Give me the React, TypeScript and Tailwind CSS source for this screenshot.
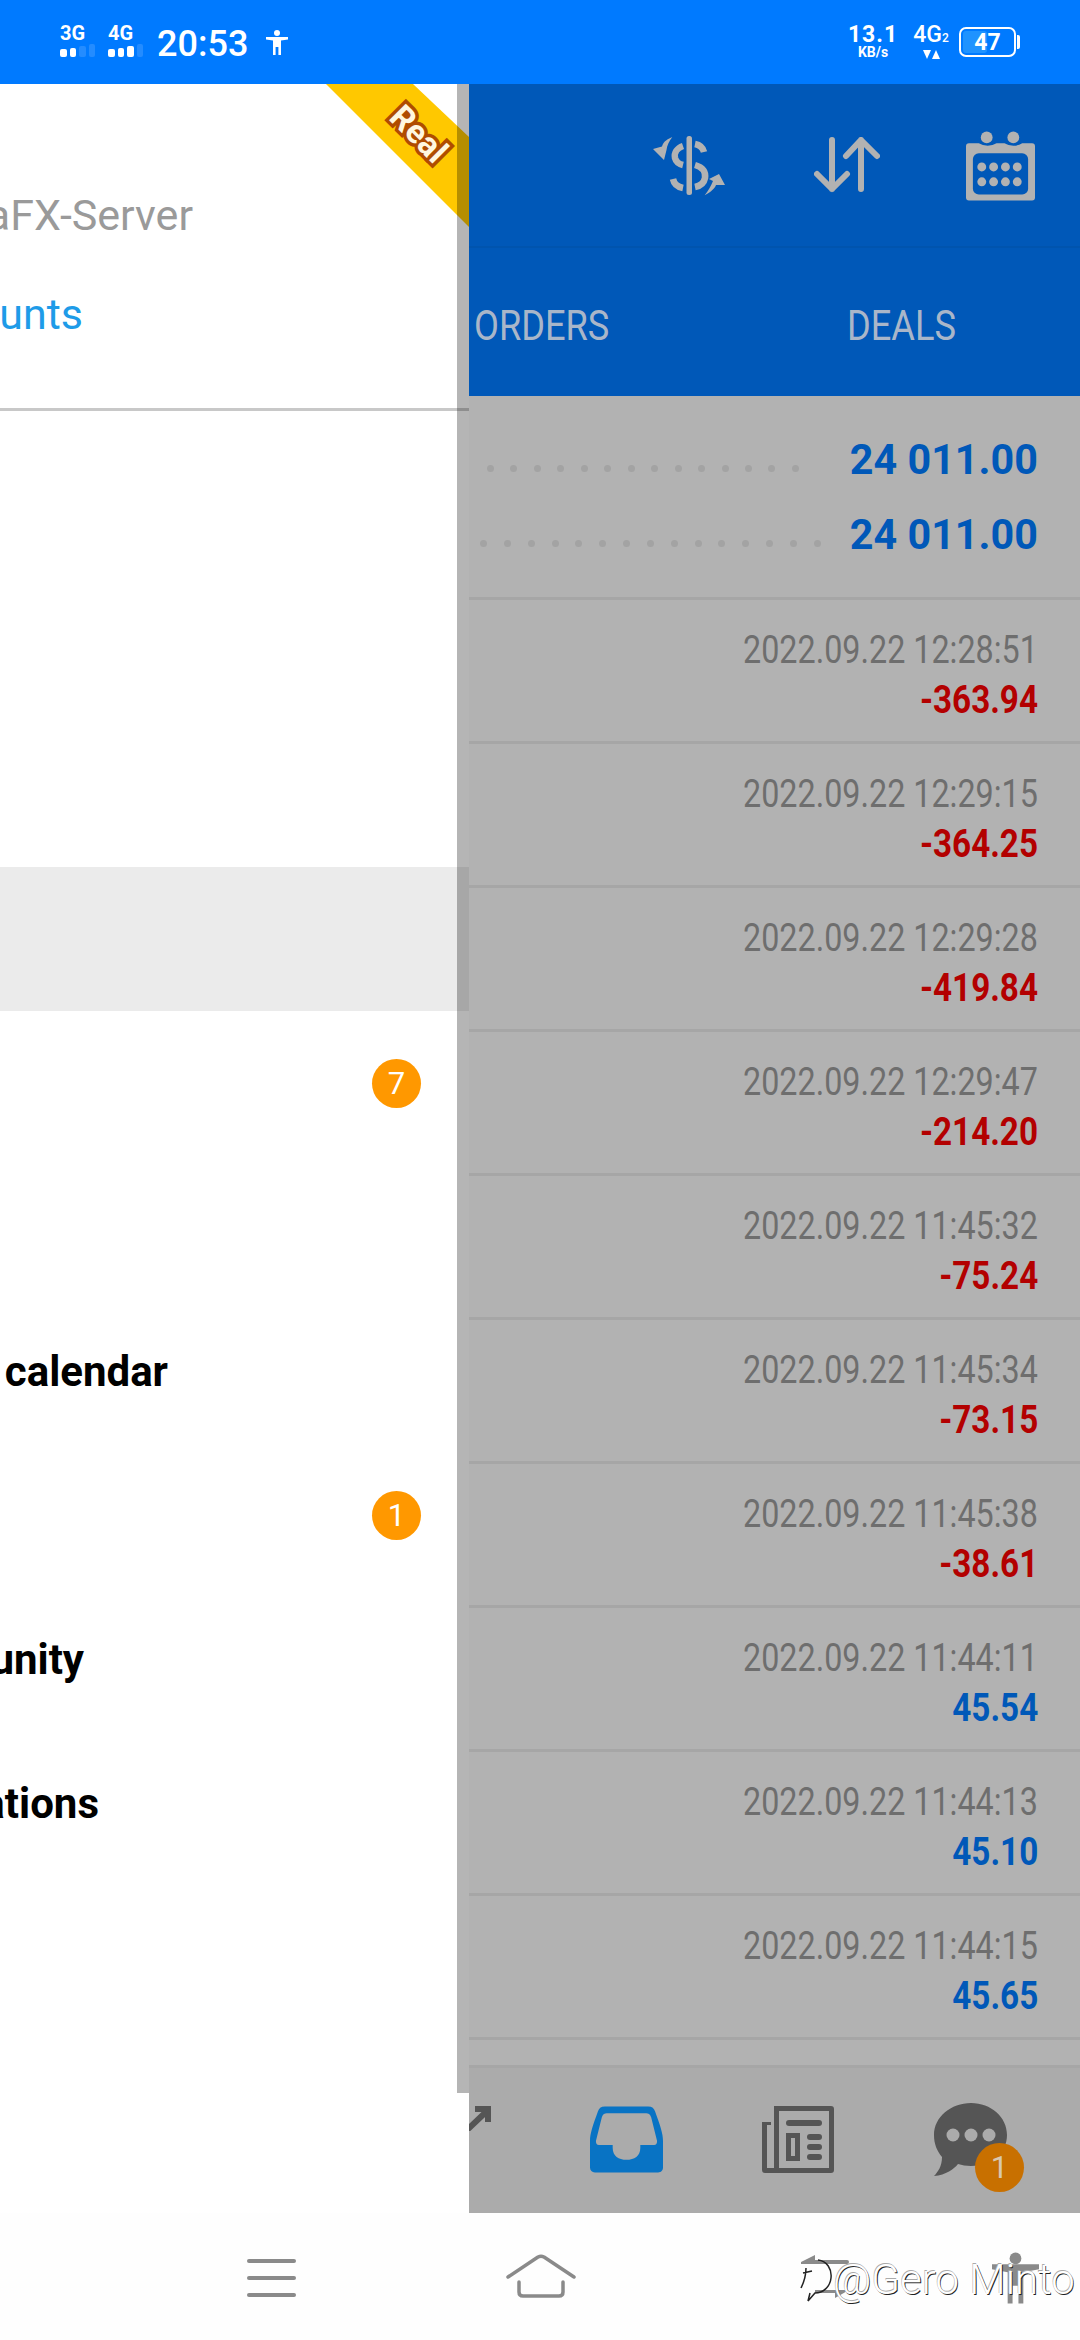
const dates: [string, string, boolean][] = [
  ["2022.09.22 12:28:51", "-363.94", false],
  ["2022.09.22 12:29:15", "-364.25", false],
  ["2022.09.22 12:29:28", "-419.84", false],
  ["2022.09.22 12:29:47", "-214.20", false],
  ["2022.09.22 11:45:32", "-75.24", false],
  ["2022.09.22 11:45:34", "-73.15", false],
  ["2022.09.22 11:45:38", "-38.61", false],
  ["2022.09.22 11:44:11", "45.54", true],
  ["2022.09.22 11:44:13", "45.10", true],
  ["2022.09.22 11:44:15", "45.65", true],
];

const roboto = "font-['Roboto',sans-serif]";

function Bars({ on }: { on: number }) {
  return (
    <div className="mt-[3px] flex items-end gap-[3px]">
      {[8, 9, 11, 13].map((h, i) => (
        <span
          key={i}
          className="w-[6.500px] rounded-[2px]"
          style={{ height: h, background: i < on ? "#fff" : "rgba(255,255,255,.14)" }}
        />
      ))}
    </div>
  );
}

function Sig({ t, on }: { t: string; on: number }) {
  return (
    <div className="mt-[-2px] flex w-[38px] flex-col items-start">
      <span className="text-[20px] leading-[16px] font-bold text-white">{t}</span>
      <Bars on={on} />
    </div>
  );
}

function StatusBar() {
  return (
    <div className={`flex h-[84px] shrink-0 items-center bg-[#007aff] ${roboto} text-white`}>
      <div className="ml-[60px] flex items-center gap-[10px]">
        <Sig t="3G" on={2} />
        <Sig t="4G" on={3} />
      </div>
      <span className="ml-[11px] mt-[3px] text-[36px] leading-none font-medium">20:53</span>
      <svg className="ml-[18px] mt-[1px]" width="22" height="25" viewBox="0 0 22 25" fill="#fff">
        <circle cx="11" cy="3" r="3" />
        <path d="M0 7h22v2.400l-7 1V25h-2.600v-8h-2.800v8H7V10.400l-7-1z" />
      </svg>
      <div className="ml-auto flex items-center">
        <div className="flex w-[46px] flex-col items-center">
          <span className="text-[23px] leading-[20px] font-bold tracking-[1px]">13.1</span>
          <span className="text-[14px] leading-[14px] font-bold">KB/s</span>
        </div>
        <div className="ml-[17px] flex w-[36px] flex-col items-center">
          <span className="text-[23px] leading-[20px] font-medium whitespace-nowrap">
            4G<span className="text-[12px]">2</span>
          </span>
          <span className="mt-[2px] flex gap-[1px]">
            <svg width="8" height="9" viewBox="0 0 8 9" fill="#fff"><path d="M0 0h8L4 9z" /></svg>
            <svg width="8" height="9" viewBox="0 0 8 9" fill="#fff"><path d="M0 9h8L4 0z" /></svg>
          </span>
        </div>
        <div className="relative ml-[10px] flex h-[30px] w-[57px] items-center justify-center rounded-[7px] border-2 border-white">
          <div className="absolute inset-y-[2px] left-[2px] w-[24px] rounded-[3px] bg-[#1f93ff]" />
          <span className="relative text-[23px] leading-none font-bold">47</span>
        </div>
        <div className="ml-[1px] mr-[60px] h-[14px] w-[3px] rounded-r-[2px] bg-white" />
      </div>
    </div>
  );
}

function DrawerRow({ label, right, badge, selected }: { label?: string; right: number; badge?: string; selected?: boolean }) {
  return (
    <div className={`relative flex h-[144px] shrink-0 items-center ${selected ? "bg-[#ebebeb]" : ""}`}>
      {label && (
        <div className="flex justify-end pt-[2px]" style={{ width: right }}>
          <span className="text-[42px] leading-none font-bold whitespace-nowrap text-black">{label}</span>
        </div>
      )}
      {badge && (
        <span className="absolute top-[48px] left-[372px] flex h-[49px] w-[49px] items-center justify-center rounded-full bg-[#ff9800] text-[31px] leading-none text-white">
          {badge}
        </span>
      )}
    </div>
  );
}

function Drawer() {
  return (
    <div className={`relative w-[469px] shrink-0 overflow-hidden bg-white ${roboto}`}>
      <div className="flex h-[327px] flex-col border-b-[3px] border-[#c8c8c8]">
        <div className="mt-[106px] flex w-[193px] justify-end">
          <span className="text-[43px] leading-[50px] whitespace-nowrap text-[#9a9a9a]">aFX-Server</span>
        </div>
        <div className="mt-[49px] flex w-[83px] justify-end">
          <span className="text-[43px] leading-[50px] whitespace-nowrap text-[#1e9be8]">unts</span>
        </div>
      </div>
      <div className="mt-[456px] flex flex-col">
        <DrawerRow selected right={0} />
        <DrawerRow right={0} badge="7" />
        <DrawerRow right={0} />
        <DrawerRow right={168} label="calendar" />
        <DrawerRow right={0} badge="1" />
        <DrawerRow right={84} label="unity" />
        <DrawerRow right={99} label="ations" />
      </div>
      <svg className="absolute top-0 left-[326px]" width="143" height="143" viewBox="0 0 143 143">
        <path d="M0 0h87l56 53v90z" fill="#ffc800" />
      </svg>
      <span className="absolute top-[32px] left-[386px] rotate-[45deg] text-[33px] leading-[36px] font-bold text-[#fff7e0] [-webkit-text-stroke:7px_#b04c00] [paint-order:stroke_fill]">
        Real
      </span>
      <div className="absolute top-0 right-0 h-[2009px] w-[12px] bg-black/[.29]" />
    </div>
  );
}

function Dots({ n, w }: { n: number; w: number }) {
  return (
    <div className="flex justify-between" style={{ width: w }}>
      {Array.from({ length: n }).map((_, i) => (
        <span key={i} className="h-[7px] w-[7px] rounded-full bg-[#a3a3a3]" />
      ))}
    </div>
  );
}

function Balance({ n, w, left }: { n: number; w: number; left: number }) {
  return (
    <div className="flex h-[75px] items-center justify-between pr-[42px]" style={{ paddingLeft: left }}>
      <div className="translate-y-[9px]">
        <Dots n={n} w={w} />
      </div>
      <span className="shrink-0 origin-right scale-x-[.96] text-[43px] leading-none font-bold whitespace-nowrap text-[#0058b8]">
        24 011.00
      </span>
    </div>
  );
}

function Deal({ d, v, up }: { d: string; v: string; up: boolean }) {
  return (
    <div className="flex h-[144px] flex-col items-end border-b-[3px] border-[#a6a6a6] pr-[42px]">
      <span className="mt-[28px] origin-right scale-x-[.85] text-[38px] leading-[44px] whitespace-nowrap text-[#6e6e6e]">
        {d}
      </span>
      <span
        className={`mt-[6px] origin-right scale-x-[.875] text-[38px] leading-[44px] font-bold whitespace-nowrap ${up ? "text-[#0058b8]" : "text-[#b30000]"}`}
      >
        {v}
      </span>
    </div>
  );
}

function HeaderIcons() {
  return (
    <div className="flex h-[164px] items-center justify-end border-b-[2px] border-[#0054ae] pr-[45px]">
      <svg width="73" height="62" viewBox="0 0 73 62" fill="#b2b2b2" className="mt-[1px]">
        <rect x="33.500" y="1" width="5.500" height="59" rx="2.500" />
        <g fill="none" stroke="#b2b2b2" strokeWidth="6.500">
          <path d="M30 11C24 13 21 18 22 23c1 4 4 6 8 7" />
          <path d="M42 9c5 1 8 4 9 8" />
          <path d="M42 30c7 2 11 6 10 13-1 5-5 8-10 9" />
          <path d="M30 53c-5-1-9-4-10-9" />
        </g>
        <path d="M19.300 2C12 5 10 8 9 11.500L0 14l11 11 2.500-10C14 11 16 6 19.300 2z" />
        <path d="M51.700 60.300C58 57 62 53 63 50l9 0-6-11-10 5 4 2c-2 5-5 10-8.300 14.300z" />
      </svg>
      <svg className="ml-[88px]" width="66" height="56" viewBox="0 0 66 56" fill="none" stroke="#b2b2b2" strokeWidth="6" strokeLinecap="round" strokeLinejoin="round">
        <path d="M18 3v49M3 37l15 15 15-15M47 52V3M32 19L47 3l16 16" />
      </svg>
      <svg className="ml-[86px] mt-[2px]" width="69" height="70" viewBox="0 0 70 70" fill="#b2b2b2">
        <path d="M3 12h10a13 9 0 0 0 18 0h8a13 9 0 0 0 18 0h10a3 3 0 0 1 3 3v52a3 3 0 0 1-3 3H3a3 3 0 0 1-3-3V15a3 3 0 0 1 3-3z" />
        <rect x="7" y="22" width="56" height="42" rx="6" fill="#0058b8" />
        <circle cx="21" cy="6" r="6" />
        <circle cx="48" cy="6" r="6" />
        {[16, 28, 40, 52].map((x) => (
          <g key={x}>
            <circle cx={x} cy="36" r="4.500" />
            <circle cx={x} cy="51" r="4.500" />
          </g>
        ))}
      </svg>
    </div>
  );
}

function Tabs() {
  return (
    <div className="flex h-[148px] items-center pt-[8px] text-[42px] leading-none text-[#a9b6c9]">
      <span className="ml-[5px] w-[133px] origin-left scale-x-[.862] whitespace-nowrap">ORDERS</span>
      <span className="ml-[240px] origin-left scale-x-[.862]">DEALS</span>
    </div>
  );
}

function BottomTabs() {
  return (
    <div className="relative flex h-[145px] shrink-0 items-center overflow-hidden bg-[#ababab]">
      <svg className="absolute top-[38px] left-0" width="22" height="25" viewBox="0 0 22 25" fill="none" stroke="#555" strokeWidth="6">
        <path d="M-2 24L18 5M6 3h13v13" />
      </svg>
      <svg className="absolute top-[38px] left-[121px]" width="73" height="67" viewBox="0 0 74 67" fill="#0873c4">
        <path d="M15 0h44c4 0 6 2 7 5 5 14 8 22 8 30v27c0 3-2 5-5 5H5c-3 0-5-2-5-5V35C0 27 3 19 8 5c1-3 3-5 7-5z" />
        <path d="M17 7h40c2 0 4 1 5 4l6 24c0 3-1 4-3 4H51c0 0 0 2 0 3 0 8-6 12-14 12S23 50 23 42v-3H9c-2 0-3-1-3-4l6-24c1-3 3-4 5-4z" fill="#ababab" />
      </svg>
      <svg className="absolute top-[38px] left-[293px]" width="72" height="67" viewBox="0 0 72 67" fill="#555">
        <path fillRule="evenodd" d="M12 0h57a3 3 0 0 1 3 3v61a3 3 0 0 1-3 3H3a3 3 0 0 1-3-3V16h9v3H5v43h7zM17 5v57h50V5z" />
        <rect x="24" y="14" width="36" height="6" rx="3" />
        <path fillRule="evenodd" d="M24 27h14v28H24zM29 32v18h4V32z" />
        <rect x="45" y="28" width="15" height="6" rx="3" />
        <rect x="45" y="38" width="15" height="6" rx="3" />
        <rect x="45" y="48" width="15" height="6" rx="3" />
      </svg>
      <svg className="absolute top-[35px] left-[465px]" width="74" height="74" viewBox="0 0 74 74" fill="#555">
        <path d="M37 0c20 0 36 14 36 32S57 63 37 63c-5 0-9-1-13-2-4 5-12 11-24 12 4-4 8-10 8-19C3 48 0 41 0 32 0 14 17 0 37 0z" />
        <circle cx="19" cy="32" r="6.500" fill="#ababab" />
        <circle cx="37" cy="32" r="6.500" fill="#ababab" />
        <circle cx="55" cy="32" r="6.500" fill="#ababab" />
      </svg>
      <span className="absolute top-[75px] left-[506px] flex h-[49px] w-[49px] items-center justify-center rounded-full bg-[#c87000] text-[31px] leading-none text-[#d8c8b0]">
        1
      </span>
    </div>
  );
}

function Main() {
  return (
    <div className={`flex min-w-0 flex-1 flex-col overflow-hidden bg-[#b2b2b2] ${roboto}`}>
      <div className="shrink-0 bg-[#0058b8]">
        <HeaderIcons />
        <Tabs />
      </div>
      <div className="min-h-0 flex-1 overflow-hidden">
        <div className="h-[204px] border-b-[3px] border-[#a6a6a6] pt-[26px]">
          <Balance n={14} w={312} left={18} />
          <Balance n={15} w={341} left={11} />
        </div>
        {dates.map(([d, v, up]) => (
          <Deal key={d} d={d} v={v} up={up} />
        ))}
        <div className="h-[28px] border-b-[3px] border-[#a6a6a6]" />
      </div>
      <BottomTabs />
    </div>
  );
}

function NavBar() {
  return (
    <div className={`relative flex h-[127px] shrink-0 bg-[#fefefe] ${roboto}`}>
      <div className="ml-[247px] mt-[46px] flex h-[38px] w-[49px] flex-col justify-between">
        <span className="h-[4px] rounded-full bg-[#8a8a8a]" />
        <span className="h-[4px] rounded-full bg-[#8a8a8a]" />
        <span className="h-[4px] rounded-full bg-[#8a8a8a]" />
      </div>
      <svg className="mt-[41px] ml-[210px]" width="70" height="44" viewBox="0 0 70 44" fill="none" stroke="#8a8a8a" strokeWidth="3.500" strokeLinecap="round" strokeLinejoin="round">
        <path d="M2 23L32 3c2-1 4-1 6 0l30 20M13 28v10c0 3 2 4 4 4h36c2 0 4-1 4-4V28" />
      </svg>
      <svg className="mt-[40px] ml-[223px]" width="52" height="48" viewBox="0 0 52 48" fill="#8a8a8a">
        <path d="M2 9L16 2v5h32a2 2 0 0 1 0 4H2zM50 37L36 45v-5H16v-3z" />
      </svg>
      <svg className="mt-[39px] ml-[141px]" width="47" height="52" viewBox="0 0 48 52" fill="#8a8a8a">
        <circle cx="24" cy="6" r="6" />
        <path d="M0 12h48v5l-16 3v32h-5V34h-6v18h-5V20L0 17z" />
      </svg>
      <div className="absolute top-[43px] left-[798px] flex items-center text-[42px] leading-none font-light whitespace-nowrap text-white [text-shadow:0.8px_0.8px_0_#222,-0.6px_-0.6px_0_#aaa]">
        <svg width="36" height="48" viewBox="0 0 36 48" fill="none" stroke="#222" strokeWidth="1.500">
          <path d="M20 4c9 1 14 9 13 18-1 9-8 15-16 15l-7 8 2-8" />
          <path d="M5 17l9-2M8 12c0 8-3 16-5 20" />
        </svg>
        <span className="ml-[-1px]">@Gero Minto</span>
      </div>
    </div>
  );
}

export default function App() {
  return (
    <div className="flex h-[2340px] w-[1080px] flex-col overflow-hidden bg-white">
      <StatusBar />
      <div className="flex min-h-0 flex-1">
        <Drawer />
        <Main />
      </div>
      <NavBar />
    </div>
  );
}
